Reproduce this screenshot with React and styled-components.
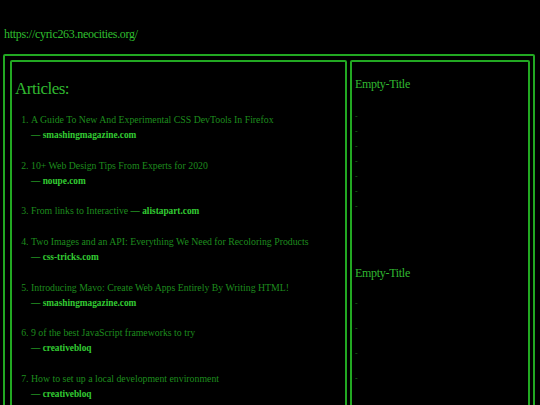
import React from 'react';
import styled, { createGlobalStyle } from 'styled-components';

const GlobalStyle = createGlobalStyle`
    html, body {
        margin: 0;
        padding: 0;
        background: #000;
    }
    body {
        font-family: "Liberation Serif", "DejaVu Serif", serif;
        color: #1e8c1e;
    }
`;

const articles = [
    { title: 'A Guide To New And Experimental CSS DevTools In Firefox', source: 'smashingmagazine.com', wrap: true },
    { title: '10+ Web Design Tips From Experts for 2020', source: 'noupe.com', wrap: true },
    { title: 'From links to Interactive', source: 'alistapart.com', wrap: false },
    { title: 'Two Images and an API: Everything We Need for Recoloring Products', source: 'css-tricks.com', wrap: true },
    { title: 'Introducing Mavo: Create Web Apps Entirely By Writing HTML!', source: 'smashingmagazine.com', wrap: true },
    { title: '9 of the best JavaScript frameworks to try', source: 'creativebloq', wrap: true },
    { title: 'How to set up a local development environment', source: 'creativebloq', wrap: true },
];

function App() {
    return (
        <Page>
            <GlobalStyle />
            <Header>
                <SiteLink href="#">https://cyric263.neocities.org/</SiteLink>
            </Header>
            <Frame>
                <Panel>
                    <Heading>Articles:</Heading>
                    <ArticleList>
                        {articles.map((a) => (
                            <Article key={a.title}>
                                {a.title}
                                {a.wrap ? <br /> : ' '}
                                <Source>— {a.source}</Source>
                            </Article>
                        ))}
                    </ArticleList>
                </Panel>
                <Side>
                    <SideTitle>Empty-Title</SideTitle>
                    <DashList spacing={15}>
                        {[0, 1, 2, 3, 4, 5, 6].map((i) => <Dash key={i}>-</Dash>)}
                    </DashList>
                    <SideTitle second>Empty-Title</SideTitle>
                    <DashList spacing={25}>
                        {[0, 1, 2, 3].map((i) => <Dash key={i}>-</Dash>)}
                    </DashList>
                </Side>
            </Frame>
        </Page>
    );
}

const Page = styled.div`
    padding: 0 5px 0 3px;
    height: 405px;
    overflow: hidden;
`;

const Header = styled.div`
    height: 54px;
    display: flex;
    align-items: flex-end;
    padding-left: 1px;
`;

const SiteLink = styled.a`
    color: #2fbf2f;
    text-decoration: none;
    font-size: 12px;
    letter-spacing: -0.3px;
    margin-bottom: 12px;
`;

const Frame = styled.div`
    border: 2px solid #22a822;
    border-radius: 2px;
    padding: 4px 3px 4px 5px;
    display: grid;
    grid-template-columns: 337px 180px;
    column-gap: 3px;
`;

const Panel = styled.div`
    border: 2px solid #22a822;
    border-radius: 2px;
    padding: 0 3px;
    min-height: 400px;
`;

const Heading = styled.h2`
    margin: 17px 0 13px 0;
    font-size: 17px;
    font-weight: normal;
    color: #30b830;
    letter-spacing: -0.5px;
`;

const ArticleList = styled.ol`
    margin: 0;
    padding-left: 16px;
    font-size: 9.8px;
    line-height: 15px;
`;

const Article = styled.li`
    margin-bottom: 15.7px;
`;

const Source = styled.span`
    color: #33cc33;
    font-weight: bold;
    font-size: 9.3px;
    line-height: 10px;
`;

const Side = styled(Panel)`
    padding: 0 3px;
`;

const SideTitle = styled.h3`
    margin: ${({ second }) => (second ? '54px 0 18px' : '15px 0 20px')};
    font-size: 12px;
    font-weight: normal;
    color: #30b830;
    letter-spacing: -0.3px;
`;

const DashList = styled.div`
    display: flex;
    flex-direction: column;
    gap: ${({ spacing }) => spacing - 10}px;
`;

const Dash = styled.span`
    font-size: 8px;
    line-height: 10px;
    color: #1a6a1a;
`;

export default App;
